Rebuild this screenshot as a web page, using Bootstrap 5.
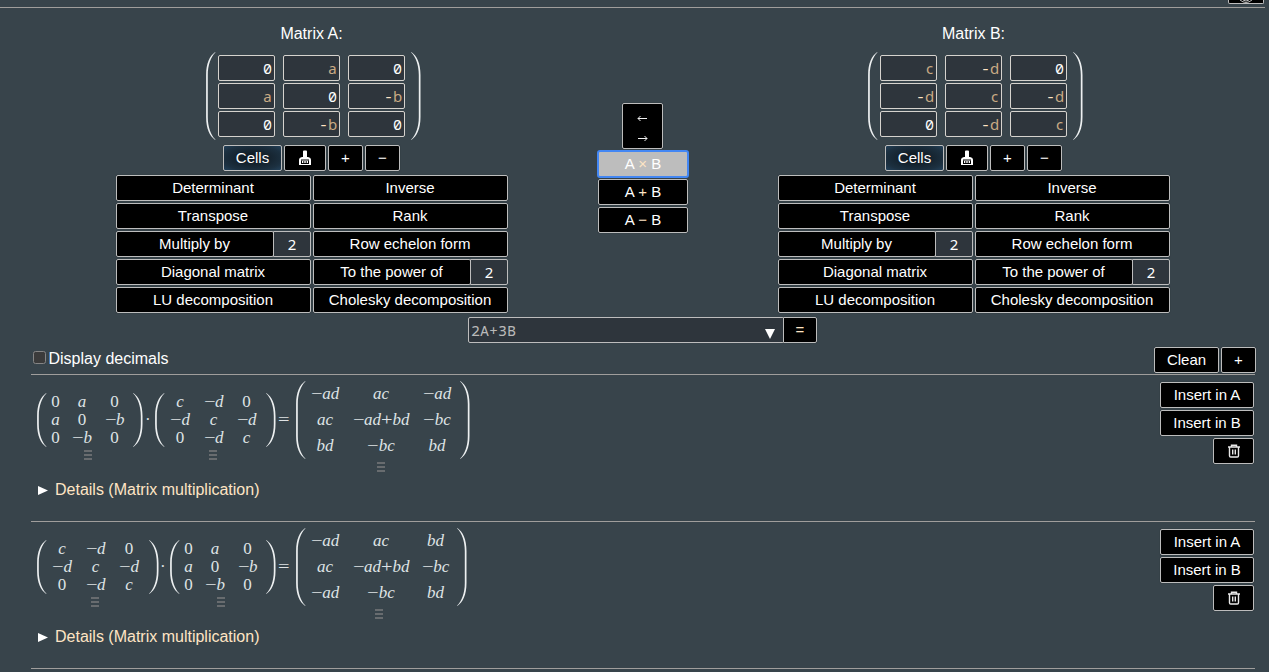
<!DOCTYPE html>
<html lang="en">
<head>
<meta charset="utf-8">
<title>Matrix calculator</title>
<link rel="stylesheet" href="https://cdn.jsdelivr.net/npm/bootstrap@5.3.0/dist/css/bootstrap.min.css">
<style>
body{background:#38444b;color:#fff;font:16px/18px "Liberation Sans",Arial,sans-serif;height:672px;overflow:hidden}
.topstrip{width:1265px;height:8px;border-bottom:1px solid #a09e9c}
.top-btn{width:36px;height:4px;margin-right:1px;border:1px solid #bdbdbd;border-top:0;background:#000;border-radius:0 0 2px 2px;overflow:hidden}
.calc-btn{height:26px;padding:0 0 1px;border:1px solid #bdbdbd;border-radius:2px;background:#000;color:#fff;font-size:15px;line-height:23px;text-align:center;box-shadow:0 0 1px #202a30}
.calc-btn:hover{background:#222;color:#fff}
.op-grid .calc-btn{padding-right:1px}
.cells-btn{width:59px;background:radial-gradient(ellipse,#101a22 15%,#1c3040 75%,#23415a)}
.w35{width:35px}.w42{width:42px}
.boards{padding:15px 0 0 116px;gap:90px}
.board{width:392px}
.board-title{height:29px;padding:1px 1px 0 0;line-height:20px}
.mat-wrap{width:215px;height:88px;margin-left:90px}
.cell-grid{display:grid;grid-template-columns:repeat(3,57px);gap:2px 8px;margin-left:3px;margin-right:6px}
.cell-in{height:26px;border:1px solid #d6d3ce;border-radius:2px;background:#2e353c;text-align:right;padding:2px 2px 0 0;line-height:21px}
.mono{font-family:"Noto Sans Mono","Noto Sans Mono CJK SC","DejaVu Sans Mono",monospace;font-size:15px}
.mono-d{font-family:"Noto Sans Mono","DejaVu Sans Mono",monospace;font-size:15px}
.var-ch{display:inline-block;width:9px;text-align:center;color:#c9aa84;font-family:"Noto Sans",sans-serif;line-height:18px}
.sand{color:#ffe4c4}
.tools{gap:2px;margin:5px 0 4px 107px}
.op-grid{display:grid;grid-template-columns:195px 195px;gap:2px}
.num-in{width:38px;height:26px;margin-left:-1px;border:1px solid #bdbdbd;border-radius:0 2px 2px 0;background:#2e353c;text-align:center;line-height:25px;font-family:"Noto Sans",sans-serif;font-size:15px}
.mid{width:90px;padding-top:80px;gap:2px}
.swap{width:41px;height:46px;padding-top:7px;margin-left:24px}
.swap svg{display:block;margin:4px auto 13px}
.active-op{background:#bdbdbd;border-color:#bdbdbd;outline:2px solid #4387f4;outline-offset:-1px;box-shadow:none}
.active-op:hover{background:#bdbdbd}
.expr{margin:4px 0 0 468px}
.expr-in{width:316px;height:26px;border:1px solid #bdbdbd;border-radius:2px 0 0 2px;background:#2e353c;color:#b9b9b9;padding:0 8px 0 2px;line-height:25px}
.eq-btn{width:34px;margin-left:-1px;border-radius:0 2px 2px 0}
.options{height:31px;padding:4px 13px 0 33px}
.box{width:13px;height:13px;border:1px solid #858585;border-radius:2.5px;background:#3b3b3b;margin-right:2.5px}
.options label{margin-top:4px}
.options label span:last-child{margin-top:-1px}
.result{width:1224px;height:147px;margin-left:31px;border-top:1px solid #a09e9c}
.last-rule{height:1px}
.formula{padding:6px 0 0 6px;height:105px}
.rights{gap:2px;padding:7px 1px 0 0}
.mx{font:italic 17px/18px "Liberation Serif",serif;color:#dfe3e5}
.mx i{font-style:normal}
.mx .mn{display:inline-block;transform:scaleX(1.2);width:11.5px;text-align:center}
.mgrid{display:grid;grid-auto-rows:18px;text-align:center;white-space:nowrap}
.mgrid span{display:flex;justify-content:center}
.mgrid.tall{grid-auto-rows:26px;line-height:25px}
.mbox{padding-top:12px}
.mbox.big{padding-top:0}
.grip{width:8px;height:10px;border:solid #686c6f;border-width:2px 0;margin-top:3px;background:linear-gradient(#686c6f,#686c6f) 0 2px/8px 2px no-repeat}
.opr{padding-top:30px;font-style:normal}
.details-row{padding:1px 0 0 7px}
</style>
</head>
<body>
<header class="topstrip d-flex justify-content-end"><div class="top-btn"><svg class="d-block mx-auto" width="14" height="3"><path d="M1 0Q7 5 13 0M4 0Q7 2 10 0" fill="none" stroke="#bbb"/></svg></div></header>
<main>
<section class="boards d-flex" id="boards"></section>
<div class="expr d-flex"><div class="expr-in mono-d d-flex justify-content-between"><span>2A+3B</span><svg class="mt-2" width="10" height="16"><path d="M0 3h10L5 13z" fill="#fff"/></svg></div><button class="calc-btn eq-btn sand">=</button></div>
<div class="options d-flex justify-content-between"><label class="d-flex"><span class="box"></span><span>Display decimals</span></label><div class="d-flex" style="gap:2px"><button class="calc-btn" style="width:65px">Clean</button><button class="calc-btn w35">+</button></div></div>
<div id="results"></div>
</main>
<script>
const paren=(h,right)=>`<svg class="flex-shrink-0 overflow-visible" width="9" height="${h}" viewBox="0 0 9 ${h}"><path ${right?'transform="matrix(-1 0 0 1 9.8 0)"':'transform="translate(-.2 0)"'} d="M9.4 0C4 4 .3 11 .3 23V${h-23}C.3 ${h-11} 4 ${h-4} 9.4 ${h}L9.6 ${h-.5}C5 ${h-5} 2 ${h-13} 2 ${h-23}V23C2 13 5 5 9.6 .5Z" fill="#edf0f1"/></svg>`;
const brush='<svg width="14" height="16" viewBox="0 0 14 16"><path d="M5 1.5Q5 .5 6 .5H8Q9 .5 9 1.5V7H10Q13 7.5 13 10V15H1V10Q1 7.5 4 7H5Z" fill="#fff"/><path d="M3 10H11M3.5 13.5V10.5M5.8 13.5V11M8.2 13.5V11M10.5 13.5V10.5M3 13.5H11" fill="none" stroke="#000" stroke-width="1"/></svg>';
const trash='<svg width="14" height="14" viewBox="0 0 14 14" fill="none" stroke="#e8e8e8" stroke-width="1.4"><path d="M1 3H13M4.5 3V1.2H9.5V3M2.5 3V11.8Q2.5 13 3.7 13H10.3Q11.5 13 11.5 11.8V3M5.7 5.5V10.5M8.3 5.5V10.5"/></svg>';
const colour=s=>s.replace(/[a-d]$/,'<span class="var-ch">$&</span>').replace(/^-/,'<span class="sand">-</span>');
const board=(n,v)=>`<div class="board"><div class="board-title text-center">Matrix ${n}:</div>
<div class="mat-wrap d-flex">${paren(88)}<div class="cell-grid align-content-center mono">${v.split(' ').map(c=>`<div class="cell-in">${colour(c)}</div>`).join('')}</div>${paren(88,1)}</div>
<div class="tools d-flex"><button class="calc-btn cells-btn">Cells</button><button class="calc-btn w42 d-flex justify-content-center align-items-center">${brush}</button><button class="calc-btn w35">+</button><button class="calc-btn w35">−</button></div>
<div class="op-grid"><button class="calc-btn">Determinant</button><button class="calc-btn">Inverse</button><button class="calc-btn">Transpose</button><button class="calc-btn">Rank</button>
<div class="d-flex"><button class="calc-btn flex-fill">Multiply by</button><div class="num-in">2</div></div><button class="calc-btn">Row echelon form</button><button class="calc-btn">Diagonal matrix</button>
<div class="d-flex"><button class="calc-btn flex-fill">To the power of</button><div class="num-in">2</div></div><button class="calc-btn">LU decomposition</button><button class="calc-btn">Cholesky decomposition</button></div></div>`;
const arrow=d=>`<svg width="11" height="7" fill="none" stroke="#f0f0f0"><path d="${d}"/></svg>`;
document.getElementById('boards').innerHTML=board('A','0 a 0 a 0 -b 0 -b 0')+
`<div class="mid d-flex flex-column"><button class="calc-btn swap">${arrow('M10 3.5H1M3.5 1L1 3.5L3.5 6')}${arrow('M1 3.5H10M7.5 1L10 3.5L7.5 6')}</button><button class="calc-btn active-op">A <span class="sand">×</span> B</button><button class="calc-btn">A <span class="sand">+</span> B</button><button class="calc-btn">A <span class="sand">−</span> B</button></div>`+board('B','c -d 0 -d c -d 0 -d c');
const sym=c=>c.replace(/[0+−]/g,m=>m==='0'?'<i>0</i>':`<i class="mn">${m}</i>`);
const mx=(v,cols,pad,grip,tall)=>{const w=cols.reduce((a,b)=>a+b,0)+pad,h=tall?78:54;
return `<div class="mbox ${tall?'big':''}"><div class="d-flex">${paren(h)}<div class="mgrid ${tall?'tall':''}" style="width:${w}px;grid-template-columns:${cols.map(c=>c+'px').join(' ')}">${v.split(' ').map(c=>`<span>${sym(c)}</span>`).join('')}</div>${paren(h,1)}</div><div class="grip" style="margin-left:${grip}px"></div></div>`};
const A=g=>mx('0 a 0 a 0 −b 0 −b 0',[19,34,31],3,g);
const row=(body)=>`<section class="result"><div class="d-flex justify-content-between"><div class="formula mx-0 mx d-flex">${body}</div><div class="rights d-flex flex-column align-items-end"><button class="calc-btn" style="width:94px">Insert in A</button><button class="calc-btn" style="width:94px">Insert in B</button><button class="calc-btn d-flex align-items-center justify-content-center" style="width:41px">${trash}</button></div></div><div class="details-row d-flex sand"><svg width="17" height="18"><path d="M0 5L10 9.5L0 14Z" fill="#fff"/></svg><span>Details (Matrix multiplication)</span></div></section>`;
const op=(s,w,p)=>`<div class="opr" style="width:${w}px;padding-left:${p}px">${s==='='?'<i class="mn">=</i>':s}</div>`;
document.getElementById('results').innerHTML=
row(A(47)+op('·',13,3)+mx('c −d 0 −d c −d 0 −d c',[32,35,31],4,54)+op('=',21,3)+mx('−ad ac −ad ac −ad+bd −bc bd −bc bd',[40,72,40],3,81,1))+
row(mx('c −d 0 −d c −d 0 −d c',[32,35,32],4,54)+op('·',12,2)+A(47)+op('=',21,3)+mx('−ad ac bd ac −ad+bd −bc −ad −bc bd',[40,72,37],3,79,1))+'<div class="result last-rule"></div>';
</script>
<script src="https://cdn.jsdelivr.net/npm/bootstrap@5.3.0/dist/js/bootstrap.bundle.min.js"></script>
</body>
</html>
